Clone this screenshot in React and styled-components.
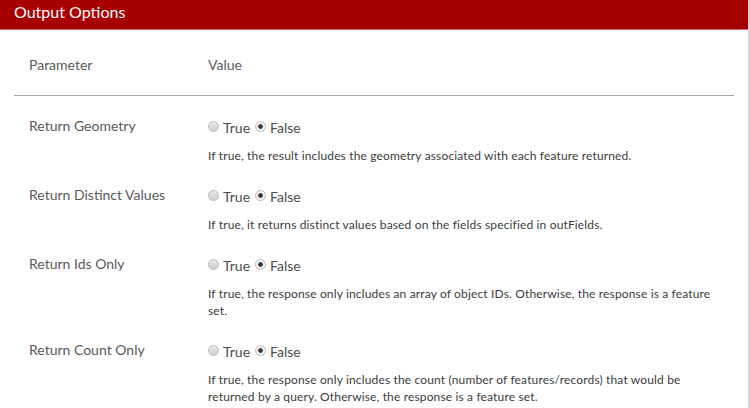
import React from "react";
import styled, { createGlobalStyle } from "styled-components";

const GlobalStyle = createGlobalStyle`
  html, body {
    margin: 0;
    padding: 0;
    background: #fff;
  }
  body {
    font-family: Lato, "Open Sans", sans-serif;
    color: #4a4a4a;
  }
`;

const Panel = styled.div`
  width: 748px;
  height: 408px;
  border-right: 2px solid #d4d4d4;
  overflow: hidden;
  background: #fff;
`;

const PanelHeader = styled.div`
  height: 30px;
  background: #a80000;
  border-bottom: 1px solid #d06666;
  box-shadow: inset 0 -6px 0 #a20000;
  box-sizing: border-box;
  color: #fff;
  font-size: 16px;
  line-height: 23px;
  padding-left: 14px;
`;

const Table = styled.div`
  margin: 0 14px;
  width: 720px;
`;

const Row = styled.div`
  display: grid;
  grid-template-columns: 179px 1fr;
  padding: ${({ $head }) => ($head ? "26px 0 21px 15px" : "0 0 22px 15px")};
  border-bottom: ${({ $head }) => ($head ? "1.5px solid #a3abab" : "none")};
  margin-bottom: ${({ $head }) => ($head ? "21px" : "0")};
`;

const Label = styled.div`
  font-size: 14px;
  line-height: 18px;
  color: #5a5a5a;
`;

const Value = styled.div`
  padding-top: 2px;
  width: 505px;
`;

const Choices = styled.div`
  display: flex;
  align-items: center;
  font-size: 14px;
  line-height: 18px;
  color: #4e4e4e;
`;

const Choice = styled.label`
  display: inline-flex;
  align-items: center;
  margin-right: 5px;
`;

const Radio = styled.span`
  width: 11px;
  height: 11px;
  border-radius: 50%;
  box-sizing: border-box;
  border: 1px solid #bcbcbc;
  background: ${({ $on }) =>
    $on
      ? "radial-gradient(circle, #3a3a3a 0 2px, #f4f4f4 2.6px)"
      : "linear-gradient(#e8e8e8, #cfcfcf)"};
  margin-right: 4px;
  margin-top: -3px;
`;

const Desc = styled.p`
  margin: 10px 0 0;
  font-size: 12px;
  letter-spacing: 0.15px;
  line-height: 17px;
  color: #3c3c3c;
`;

const options = [
  {
    name: "Return Geometry",
    desc: "If true, the result includes the geometry associated with each feature returned.",
  },
  {
    name: "Return Distinct Values",
    desc: "If true, it returns distinct values based on the fields specified in outFields.",
  },
  {
    name: "Return Ids Only",
    desc: "If true, the response only includes an array of object IDs. Otherwise, the response is a feature set.",
  },
  {
    name: "Return Count Only",
    desc: "If true, the response only includes the count (number of features/records) that would be returned by a query. Otherwise, the response is a feature set.",
  },
];

const App = () => (
  <>
    <GlobalStyle />
    <Panel>
      <PanelHeader>Output Options</PanelHeader>
      <Table>
        <Row $head>
          <Label>Parameter</Label>
          <Label>Value</Label>
        </Row>
        {options.map((opt) => (
          <Row key={opt.name}>
            <Label>{opt.name}</Label>
            <Value>
              <Choices>
                <Choice>
                  <Radio />
                  True
                </Choice>
                <Choice>
                  <Radio $on />
                  False
                </Choice>
              </Choices>
              <Desc>{opt.desc}</Desc>
            </Value>
          </Row>
        ))}
      </Table>
    </Panel>
  </>
);

export default App;
